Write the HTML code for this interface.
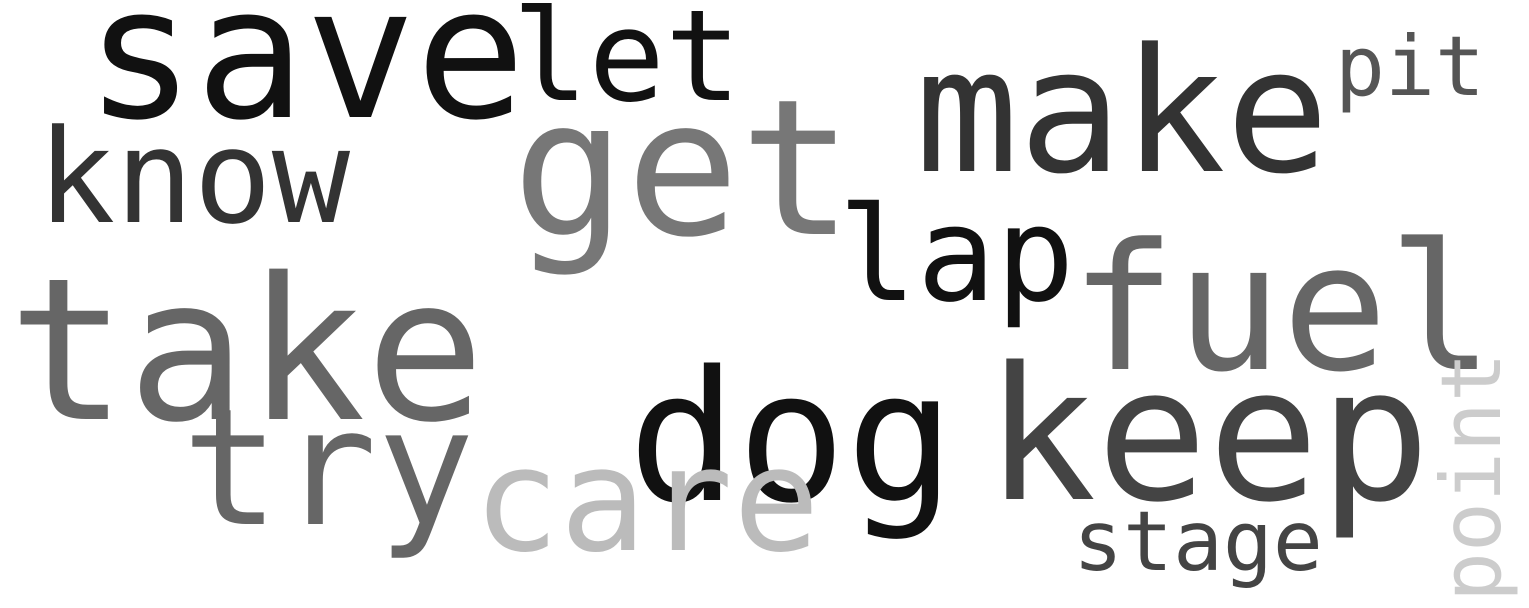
<!DOCTYPE html>
<html><head><meta charset="utf-8"><style>
html,body{margin:0;padding:0;background:#fff;width:1529px;height:608px;overflow:hidden}
body{position:relative;font-family:"DejaVu Sans Mono","Liberation Mono",monospace}
span{position:absolute;line-height:1;white-space:nowrap}
</style></head><body>
<span style="left:85px;top:-37px;font-size:183px;color:#111">save</span>
<span style="left:512px;top:-7px;font-size:127px;color:#111">let</span>
<span style="left:915px;top:26px;font-size:172px;color:#333">make</span>
<span style="left:1335px;top:25px;font-size:83px;color:#555">pit</span>
<span style="left:37px;top:112px;font-size:130px;color:#333">know</span>
<span style="left:512px;top:75px;font-size:189px;color:#777">get</span>
<span style="left:838px;top:189px;font-size:131px;color:#111">lap</span>
<span style="left:1070px;top:221px;font-size:176px;color:#666">fuel</span>
<span style="left:8px;top:252px;font-size:198px;color:#666">take</span>
<span style="left:628px;top:347px;font-size:181px;color:#111">dog</span>
<span style="left:985px;top:343px;font-size:185px;color:#444">keep</span>
<span style="left:182px;top:388px;font-size:162px;color:#666">try</span>
<span style="left:473px;top:428px;font-size:144px;color:#bbb">care</span>
<span style="left:1073px;top:500px;font-size:83px;color:#444">stage</span>
<span style="left:1430px;top:602px;font-size:83px;color:#ccc;transform:rotate(-90deg);transform-origin:0 0">point</span>
</body></html>
